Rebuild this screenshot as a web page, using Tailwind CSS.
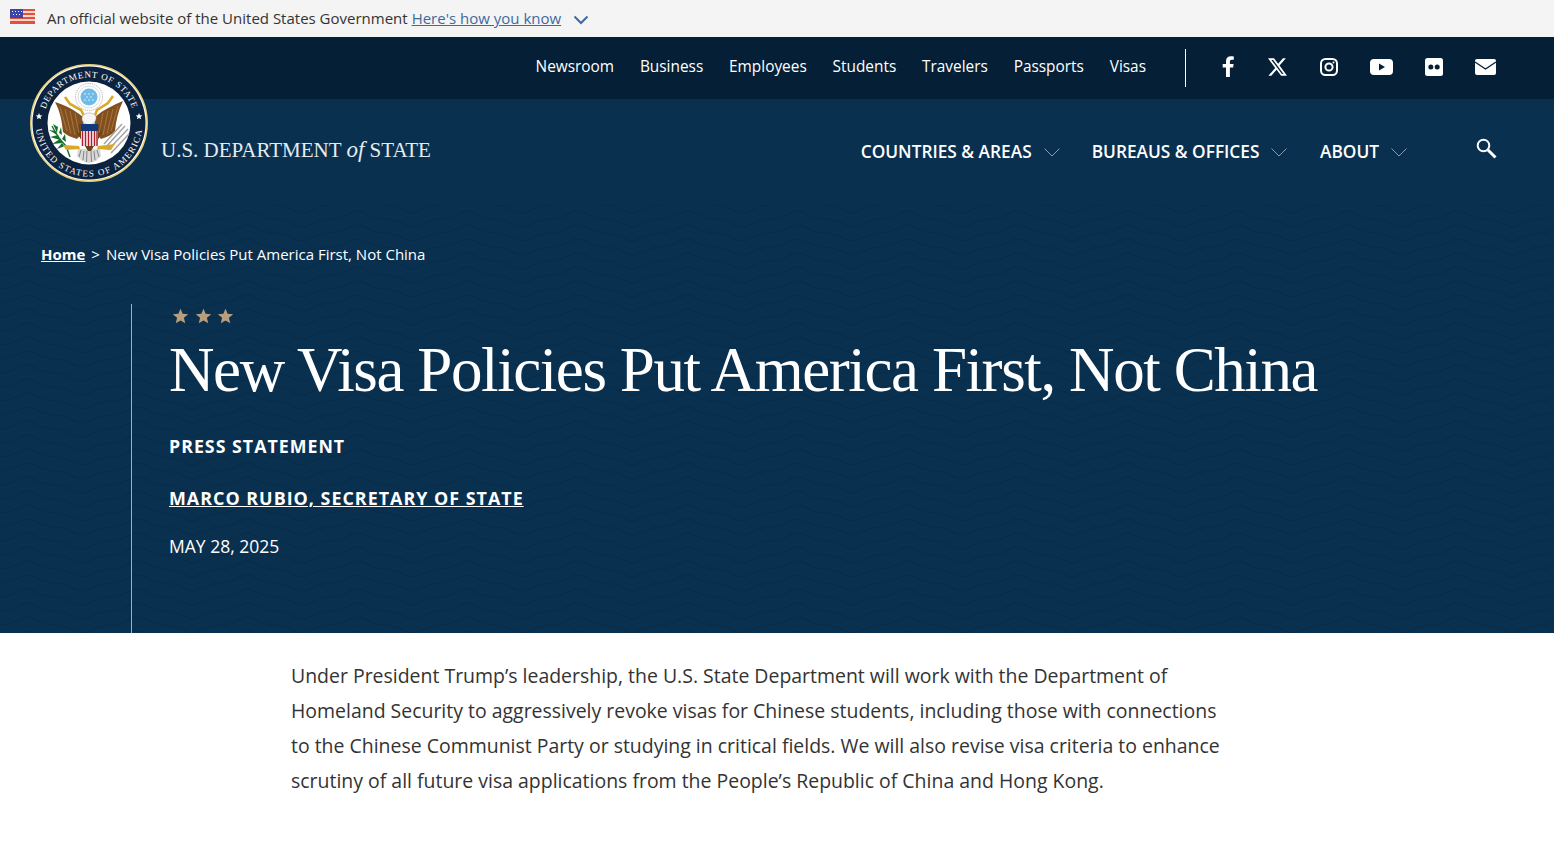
<!DOCTYPE html>
<html>
<head>
    <title>New Visa Policies Put America First, Not China</title>
    <script src="https://cdn.jsdelivr.net/npm/@tailwindcss/browser@4"></script>
</head>
<body class="bg-white font-['Open_Sans',sans-serif] text-[#333]">
    <!-- gov banner -->
    <div class="h-[37px] bg-[#f4f4f4] flex items-center pl-[10px] text-[15px] text-[#333]">
        <svg width="25" height="15" viewBox="0 0 25 15" class="mr-[12px] -mt-[4px]">
            <rect width="25" height="15" fill="#fbd5cc"/>
            <g fill="#e0503f">
                <rect width="25" height="2"/><rect y="4" width="25" height="2"/><rect y="8" width="25" height="2"/><rect y="12" width="25" height="3"/>
            </g>
            <rect width="13" height="9" fill="#3b46a8"/>
            <g fill="#fff">
                <rect x="2" y="2" width="1" height="1"/><rect x="5" y="2" width="1" height="1"/><rect x="8" y="2" width="1" height="1"/><rect x="11" y="2" width="1" height="1"/>
                <rect x="3" y="5" width="1" height="1"/><rect x="6" y="5" width="1" height="1"/><rect x="9" y="5" width="1" height="1"/>
            </g>
        </svg>
        <span>An official website of the United States Government</span>
        <a href="#" class="ml-[4px] underline text-[#3d6a9e]">Here's how you know</a>
        <svg width="16" height="10" viewBox="0 0 16 10" class="ml-[12px] mt-[2px]" fill="none" stroke="#3d6a9e" stroke-width="2"><path d="M1.500 1.500 8 8l6.500-6.500"/></svg>
    </div>

    <header class="relative">
        <!-- top nav -->
        <div class="h-[62px] bg-[#052036] flex items-center justify-end text-white text-[15.400px]">
            <nav class="flex gap-[25.800px] -mt-[2px]">
                <a href="#">Newsroom</a>
                <a href="#">Business</a>
                <a href="#">Employees</a>
                <a href="#">Students</a>
                <a href="#">Travelers</a>
                <a href="#">Passports</a>
                <a href="#">Visas</a>
            </nav>
            <div class="w-px h-[38px] bg-white ml-[39px] mr-[36px]"></div>
            <div class="flex items-center gap-[32px] pr-[58px] -mt-[3px]">
                <svg width="14" height="21" viewBox="0 0 14 21" fill="#fff"><path d="M4 21V11.500H.7V8H4V5.300C4 2 6 .3 8.800.3c1.400 0 2.600.1 3 .2v3.300h-2c-1.500 0-1.900.8-1.900 1.900V8h3.700l-.5 3.500H7.900V21z"/></svg>
                <svg width="19" height="18" viewBox="0 0 24 22" fill="#fff" class="mr-[1px]"><path d="M18.900 0h3.700l-8 9.200L24 22h-7.400l-5.800-7.600L4.200 22H.5l8.600-9.800L0 0h7.600l5.200 6.900zm-1.300 19.800h2L6.500 2.100H4.300z"/></svg>
                <svg width="18" height="18" viewBox="0 0 18 18" fill="none" stroke="#fff"><rect x="1" y="1" width="16" height="16" rx="4.500" stroke-width="2"/><circle cx="9" cy="9" r="3.600" stroke-width="2"/><circle cx="13.500" cy="4.500" r="1" fill="#fff" stroke="none"/></svg>
                <svg width="23" height="16" viewBox="0 0 23 16"><rect width="23" height="16" rx="4" fill="#fff"/><path d="M9 4.500v7l6-3.500z" fill="#052036"/></svg>
                <svg width="18" height="18" viewBox="0 0 18 18"><rect width="18" height="18" rx="2.500" fill="#fff"/><circle cx="5.800" cy="9" r="2.500" fill="#052036"/><circle cx="12.200" cy="9" r="2.500" fill="#052036"/></svg>
                <svg width="21" height="16" viewBox="0 0 21 16"><rect width="21" height="16" rx="2" fill="#fff"/><path d="M0 3l10.500 7L21 3" fill="none" stroke="#052036" stroke-width="1.300"/></svg>
            </div>
        </div>
        <!-- main nav -->
        <div class="h-[106px] bg-[#0a304f] flex items-start justify-between text-white">
            <div class="pl-[161px] pt-[37px] font-['Liberation_Serif',serif] text-[21px] text-[#e6ebef] leading-[28px] whitespace-nowrap">
                U.S. DEPARTMENT <i class="text-[23px]">of</i> STATE
            </div>
            <div class="flex items-center pt-[42px] pr-[57px] font-semibold text-[17.300px] leading-[22px]">
                <a href="#" class="flex items-center">COUNTRIES &amp; AREAS
                    <svg width="16" height="9" viewBox="0 0 16 9" fill="none" stroke="#8a9bad" class="ml-[12px]"><path d="M.5.500 8 8 15.500.500"/></svg></a>
                <a href="#" class="flex items-center ml-[32px]">BUREAUS &amp; OFFICES
                    <svg width="16" height="9" viewBox="0 0 16 9" fill="none" stroke="#8a9bad" class="ml-[12px]"><path d="M.5.500 8 8 15.500.500"/></svg></a>
                <a href="#" class="flex items-center ml-[32.500px]">ABOUT
                    <svg width="16" height="9" viewBox="0 0 16 9" fill="none" stroke="#8a9bad" class="ml-[12px]"><path d="M.5.500 8 8 15.500.500"/></svg></a>
                <svg width="21" height="21" viewBox="0 0 21 21" fill="none" stroke="#fff" class="ml-[69px] -mt-[7px]"><circle cx="7.500" cy="7.500" r="5.800" stroke-width="2"/><path d="M12 12l7.500 7.500" stroke-width="3"/></svg>
            </div>
        </div>

        <!-- seal -->
        <svg width="120" height="120" viewBox="0 0 120 120" class="absolute left-[29px] top-[26px]">
            <defs>
                <path id="sealTop" d="M 14.500 60 A 45.500 45.500 0 0 1 105.500 60"/>
                <path id="sealBottom" d="M 6.500 60 A 53.500 53.500 0 0 0 113.500 60"/>
            </defs>
            <circle cx="60" cy="60" r="58.200" fill="#fff" stroke="#e6cf7a" stroke-width="1.500"/>
            <circle cx="60" cy="60" r="56.500" fill="#0c2340"/>
            <circle cx="60" cy="60" r="41.500" fill="#fff"/>
            <text font-family="Liberation Serif" font-size="9" fill="#fff" letter-spacing=".7"><textPath href="#sealTop" startOffset="50%" text-anchor="middle">DEPARTMENT OF STATE</textPath></text>
            <text font-family="Liberation Serif" font-size="9" fill="#fff" letter-spacing="1.300"><textPath href="#sealBottom" startOffset="50%" text-anchor="middle">UNITED STATES OF AMERICA</textPath></text>
            <path d="M10 50l1 2.300 2.400.1-1.900 1.500.7 2.400-2.200-1.400-2.100 1.400.7-2.400-1.900-1.500 2.400-.1zM110 50l1 2.300 2.400.1-1.900 1.500.7 2.400-2.200-1.400-2.100 1.400.7-2.400-1.900-1.500 2.400-.1z" fill="#fff"/>
            <!-- glory -->
            <circle cx="60" cy="34" r="13.500" fill="none" stroke="#9a9a9a" stroke-width=".8" stroke-dasharray="1.200 1"/>
            <circle cx="60" cy="34" r="11" fill="none" stroke="#c4c4c4" stroke-width=".6"/>
            <circle cx="60" cy="34" r="8.500" fill="#6fbbe8"/>
            <g fill="#fff"><circle cx="56" cy="31" r=".7"/><circle cx="60" cy="31" r=".7"/><circle cx="64" cy="31" r=".7"/><circle cx="58" cy="34" r=".7"/><circle cx="62" cy="34" r=".7"/><circle cx="56" cy="37" r=".7"/><circle cx="60" cy="37" r=".7"/><circle cx="64" cy="37" r=".7"/></g>
            <!-- tail -->
            <path d="M49 86l-1 7 5 5 7 2 7-2 5-5-1-7z" fill="#d8d8d8"/>
            <path d="M52 87l-2 7M55 88l-1 9M58 88l-.5 11M62 88l.5 11M65 88l1 9M68 87l2 7" stroke="#777" stroke-width=".9"/>
            <!-- wings + body -->
            <path d="M26 39C36 42 46 47 54 54L55 68 48 76C42 74 37 72 34 69C33 58 31 48 26 39z" fill="#82501f"/>
            <path d="M94 38C84 42 74 47 66 54L65 68 72 76C78 74 83 72 86 68C87 58 89 48 94 38z" fill="#82501f"/>
            <path d="M48 70l11 18h3l11-18-3-9H50z" fill="#6e4219"/>
            <path d="M31 44l7 24M36 46l6 25M41 48l5 24M46 50l4 20M89 43l-7 25M84 46l-6 25M79 48l-5 24M74 50l-4 20" stroke="#a87a44" stroke-width=".9" fill="none"/>
            <!-- ribbon -->
            <path d="M36 34l5 7 11 6 4 8M84 33l-5 7-11 7-3 8" fill="none" stroke="#d9a928" stroke-width="2.600"/>
            <!-- head -->
            <path d="M53 56c0-4 3-6 7-6s8 2 7 6c-.5 3-3 5-7 6-4-1-7-3-7-6z" fill="#f5f5f5" stroke="#999" stroke-width=".5"/>
            <!-- shield -->
            <rect x="52" y="61" width="17" height="7" fill="#123a7a"/>
            <rect x="52" y="68" width="17" height="15" fill="#fff"/>
            <path d="M53.500 68v15M56.500 68v15M59.500 68v15M62.500 68v15M65.500 68v15M68 68v15" stroke="#b01e2e" stroke-width="1.500"/>
            <!-- olive branch -->
            <path d="M23 63c4 8 10 16 14 20l4 11" stroke="#16702c" stroke-width="1.400" fill="none"/>
            <path d="M24 61l5 3-1 6zM20 67l7 1 1 4zM32 64l1 8-3-2zM21 74l8-2 2 5zM36 71l1 8-4-3zM23 81l8-5 3 4zM28 86l5-6 3 3z" fill="#16702c"/>
            <!-- arrows -->
            <path d="M99 66L79 87M96 63L76 85M100 71L82 90M93 61L75 81" stroke="#a5a5a5" stroke-width="1.500" fill="none"/>
            <!-- talons -->
            <path d="M34 82l16 1 1 3-14 1zM86 81l-17 2-1 3 14 1z" fill="#d9a928"/>
        </svg>
    </header>

    <!-- hero -->
    <section class="relative h-[428px] bg-[#0a304f] text-white overflow-hidden">
        <svg class="absolute inset-0 w-full h-full" aria-hidden="true">
            <defs>
                <pattern id="waves" width="110" height="14" patternUnits="userSpaceOnUse">
                    <path d="M0 0c14 0 20-8 27.500-8S41 0 55 0s20 8 27.500 8S96 0 110 0" fill="none" stroke="#052a47" stroke-width="1.400"/>
                    <path d="M0 14c14 0 20-8 27.500-8S41 14 55 14s20 8 27.500 8S96 14 110 14" fill="none" stroke="#052a47" stroke-width="1.400"/>
                </pattern>
            </defs>
            <rect width="100%" height="100%" fill="url(#waves)" opacity=".6"/>
        </svg>
        <div class="relative">
            <p class="pl-[41px] pt-[39px] text-[15px] leading-[20px]">
                <a href="#" class="font-bold underline">Home</a><span class="mx-[6px]">&gt;</span>New Visa Policies Put America First, Not China
            </p>
            <div class="ml-[131px] mt-[40px] h-[329px] border-l border-[#b9a98f] pl-[37px]">
                <div class="flex gap-[5.500px] pl-[3px] pt-[4px] h-[24px]">
                    <svg width="17" height="16" viewBox="0 0 24 24" fill="#b79f7e"><path d="M12 1l3.200 7.800 8.300.6-6.400 5.400 2 8.200-7.100-4.400L4.900 23l2-8.200L.5 9.400l8.300-.6z"/></svg>
                    <svg width="17" height="16" viewBox="0 0 24 24" fill="#b79f7e"><path d="M12 1l3.200 7.800 8.300.6-6.400 5.400 2 8.200-7.100-4.400L4.900 23l2-8.200L.5 9.400l8.300-.6z"/></svg>
                    <svg width="17" height="16" viewBox="0 0 24 24" fill="#b79f7e"><path d="M12 1l3.200 7.800 8.300.6-6.400 5.400 2 8.200-7.100-4.400L4.900 23l2-8.200L.5 9.400l8.300-.6z"/></svg>
                </div>
                <h1 class="font-['Liberation_Serif',serif] text-[63px] leading-[72px] mt-[6px] whitespace-nowrap tracking-[-1.410px]">New Visa Policies Put America First, Not China</h1>
                <p class="mt-[28px] font-bold text-[17.800px] leading-[24px] tracking-[1px]">PRESS STATEMENT</p>
                <p class="mt-[28px] font-bold text-[17.900px] leading-[24px] tracking-[1px]"><a href="#" class="underline">MARCO RUBIO, SECRETARY OF STATE</a></p>
                <p class="mt-[24px] text-[17.500px] leading-[24px]">MAY 28, 2025</p>
            </div>
        </div>
    </section>

    <!-- body copy -->
    <main class="pl-[291px] pt-[25px] w-[1223px]">
        <p class="text-[19.470px] leading-[35px] text-[#333]">Under President Trump’s leadership, the U.S. State Department will work with the Department of Homeland Security to aggressively revoke visas for Chinese students, including those with connections to the Chinese Communist Party or studying in critical fields. We will also revise visa criteria to enhance scrutiny of all future visa applications from the People’s Republic of China and Hong Kong.</p>
    </main>
</body>
</html>
